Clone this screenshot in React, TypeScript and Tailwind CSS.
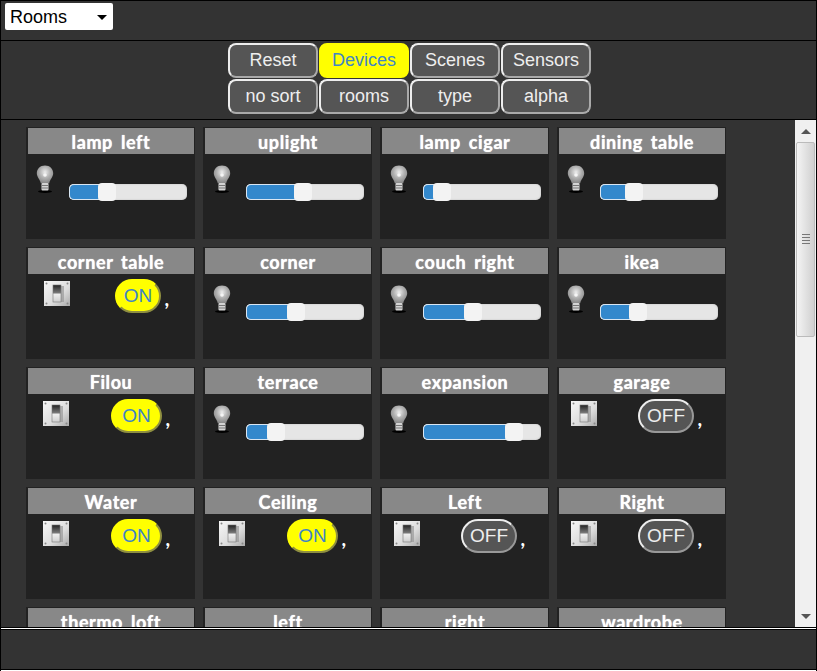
import type { FC } from 'react'

type Device = {
  name: string
  level?: number
  on?: boolean
  indent?: number
}

const DEVICES: Device[] = [
  { name: 'lamp left', level: 32 },
  { name: 'uplight', level: 48 },
  { name: 'lamp cigar', level: 16 },
  { name: 'dining table', level: 29 },
  { name: 'corner table', on: true, indent: 16 },
  { name: 'corner', level: 42 },
  { name: 'couch right', level: 42 },
  { name: 'ikea', level: 32 },
  { name: 'Filou', on: true, indent: 15 },
  { name: 'terrace', level: 25 },
  { name: 'expansion', level: 77 },
  { name: 'garage', on: false, indent: 12 },
  { name: 'Water', on: true, indent: 15 },
  { name: 'Ceiling', on: true, indent: 14 },
  { name: 'Left', on: false, indent: 12 },
  { name: 'Right', on: false, indent: 12 },
  { name: 'thermo loft' },
  { name: 'left' },
  { name: 'right' },
  { name: 'wardrobe' },
]

const TOP_BUTTONS = ['Reset', 'Devices', 'Scenes', 'Sensors']
const SORT_BUTTONS = ['no sort', 'rooms', 'type', 'alpha']

const Bulb: FC = () => (
  <svg width="18" height="28" viewBox="0 0 18 28" className="shrink-0">
    <defs>
      <radialGradient id="glass" cx="50%" cy="38%" r="60%">
        <stop offset="0%" stopColor="#ececec" />
        <stop offset="55%" stopColor="#b0b0b0" />
        <stop offset="100%" stopColor="#8a8a8a" />
      </radialGradient>
    </defs>
    <ellipse cx="9" cy="26.500" rx="7" ry="1.500" fill="#000" />
    <path d="M9 0.500C4 0.500 0.800 4 0.800 8.300c0 3.700 3.200 6 4 10h8.400c.8-4 4-6.300 4-10C17.200 4 14 0.500 9 0.500z" fill="url(#glass)" />
    <rect x="5.500" y="18" width="7" height="7.500" rx="1" fill="#d4d4d4" />
    <path d="M5.500 20.500h7M5.500 23h7" stroke="#777" strokeWidth="1" />
    <circle cx="9" cy="10" r="1.800" fill="#f5f5f5" />
  </svg>
)

const SwitchIcon: FC = () => (
  <svg width="26" height="25" viewBox="0 0 26 25" className="shrink-0">
    <defs>
      <linearGradient id="plate" x1="0" y1="0" x2="1" y2="1">
        <stop offset="0%" stopColor="#f7f7f7" />
        <stop offset="60%" stopColor="#dcdcdc" />
        <stop offset="100%" stopColor="#a9a9a9" />
      </linearGradient>
      <linearGradient id="lever" x1="0" y1="0" x2="0" y2="1">
        <stop offset="0%" stopColor="#222" />
        <stop offset="45%" stopColor="#777" />
        <stop offset="55%" stopColor="#eee" />
        <stop offset="100%" stopColor="#cfcfcf" />
      </linearGradient>
    </defs>
    <rect width="26" height="25" fill="url(#plate)" />
    <path d="M17 5h3v16h-5z" fill="#999" opacity="0.7" />
    <rect x="9" y="4" width="8" height="17" fill="url(#lever)" stroke="#777" strokeWidth="0.6" />
    <circle cx="2.500" cy="2.500" r="1" fill="#888" />
    <circle cx="23.500" cy="2.500" r="1" fill="#888" />
    <circle cx="2.500" cy="22.500" r="1" fill="#888" />
    <circle cx="23.500" cy="22.500" r="1" fill="#888" />
  </svg>
)

const Slider: FC<{ level: number }> = ({ level }) => (
  <div className="relative ml-[15px] mt-[19px] h-[16px] w-[118px] rounded-[5px] bg-[#e6e6e6] shadow-[inset_0_0_2px_#bbb]">
    <div
      className="h-full rounded-l-[5px] border border-r-0 border-[#d9e6f2] bg-[#3388cc]"
      style={{ width: `${level}%` }}
    />
    <div
      className="absolute top-[-1px] ml-[-9px] h-[18px] w-[18px] rounded-[4px] bg-[#f3f3f3]"
      style={{ left: `${level}%` }}
    />
  </div>
)

const Toggle: FC<{ on: boolean; narrow: boolean }> = ({ on, narrow }) => (
  <div className={`flex items-end ${narrow ? 'ml-[45px]' : on ? 'ml-[42px]' : 'ml-[41px]'}`}>
    <div
      className={
        on
          ? `flex h-[34px] ${narrow ? 'w-[46px]' : 'w-[51px]'} items-center justify-center rounded-[17px] border-2 border-[#ffff00] border-b-[#8f8f40] border-r-[#8f8f40] bg-[#ffff00] text-[19px] text-[#3f85c4]`
          : 'flex h-[34px] w-[56px] items-center justify-center rounded-[17px] border-2 border-[#999] border-t-[#eee] border-l-[#eee] bg-[#555] text-[19px] text-[#eee]'
      }
    >
      {on ? 'ON' : 'OFF'}
    </div>
    <span className="mb-[5px] ml-[4px] font-['Lato',sans-serif] text-[20px] font-bold italic leading-none text-white">,</span>
  </div>
)

const DeviceCard: FC<{ device: Device }> = ({ device }) => (
  <div className="h-[112px] bg-[#222222] pl-[2px] pr-[1px] pt-[1px]">
    <div className="flex h-[26px] items-center justify-center bg-[#888888] pt-[2px] font-['Lato',sans-serif] text-[18px] font-bold tracking-[0.6px] [word-spacing:3px] text-white [text-shadow:0_0_1px_#fff]">
      {device.name}
    </div>
    {device.level !== undefined && (
      <div className="flex items-start pl-[8px] pt-[11px]">
        <Bulb />
        <Slider level={device.level} />
      </div>
    )}
    {device.on !== undefined && (
      <div className="flex items-start pt-[5px]" style={{ paddingLeft: device.indent }}>
        <div className="pt-[2px]">
          <SwitchIcon />
        </div>
        <Toggle on={device.on} narrow={device.name === 'corner table'} />
      </div>
    )}
  </div>
)

const ScrollArrow: FC<{ down?: boolean }> = ({ down }) => (
  <div className="flex h-[22px] items-center justify-center">
    <div
      className={
        down
          ? 'h-0 w-0 border-x-[5px] border-t-[5px] border-x-transparent border-t-[#555]'
          : 'h-0 w-0 border-x-[5px] border-b-[5px] border-x-transparent border-b-[#555]'
      }
    />
  </div>
)

const NavButton: FC<{ label: string; active?: boolean }> = ({ label, active }) => (
  <button
    className={
      active
        ? 'h-[35px] w-[90px] rounded-[8px] border-2 border-[#ffff00] bg-[#ffff00] text-[18px] text-[#3f85c4]'
        : 'h-[35px] w-[90px] rounded-[8px] border-2 border-[#aaa] border-t-[#eee] border-l-[#eee] bg-[#555] text-[18px] text-[#eee]'
    }
  >
    {label}
  </button>
)

const App: FC = () => {
  return (
    <div className="flex h-screen flex-col border-x border-black bg-white font-['Liberation_Sans',Arial,sans-serif]">
      {/* Room picker */}
      <div className="flex h-[41px] shrink-0 items-start border-y border-black bg-[#333333] pl-[4px] pt-[2px]">
        <div className="relative h-[27px] w-[108px] rounded-[2px] bg-white">
          <select className="h-full w-full appearance-none bg-transparent pl-[5px] pt-[1px] text-[18px] text-black">
            <option>Rooms</option>
          </select>
          <div className="absolute right-[6px] top-[12px] h-0 w-0 border-x-[5px] border-t-[5px] border-x-transparent border-t-black" />
        </div>
      </div>

      {/* Filter and sort buttons */}
      <div className="flex h-[79px] shrink-0 flex-col items-center gap-[1px] border-b border-black bg-[#333333] pl-[2px] pt-[2px]">
        <div className="flex gap-[1px]">
          {TOP_BUTTONS.map((b) => (
            <NavButton key={b} label={b} active={b === 'Devices'} />
          ))}
        </div>
        <div className="flex gap-[1px]">
          {SORT_BUTTONS.map((b) => (
            <NavButton key={b} label={b} />
          ))}
        </div>
      </div>

      {/* Device list */}
      <div className="flex min-h-0 flex-1 bg-[#333333]">
        <div className="min-w-0 flex-1 overflow-hidden pl-[25px] pt-[7px]">
          <div className="grid w-[700px] grid-cols-4 gap-x-[8px] gap-y-[8px]">
            {DEVICES.map((d) => (
              <DeviceCard key={d.name} device={d} />
            ))}
          </div>
        </div>
        <div className="flex w-[21px] shrink-0 flex-col bg-[#f0f0f0]">
          <ScrollArrow />
          <div className="relative mx-[1px] h-[195px] rounded-[2px] border border-[#bbb] bg-gradient-to-r from-[#f4f4f4] to-[#d0d0d0]">
            <div className="absolute left-[5px] top-[91px] flex w-[8px] flex-col gap-[2px]">
              <div className="h-px bg-[#777]" />
              <div className="h-px bg-[#777]" />
              <div className="h-px bg-[#777]" />
              <div className="h-px bg-[#777]" />
            </div>
          </div>
          <div className="flex-1" />
          <ScrollArrow down />
        </div>
      </div>

      {/* Footer */}
      <div className="h-[44px] shrink-0 border-t border-black bg-white pt-px">
        <div className="h-[41px] border-y border-black bg-[#333333]" />
      </div>
    </div>
  )
}

export default App
